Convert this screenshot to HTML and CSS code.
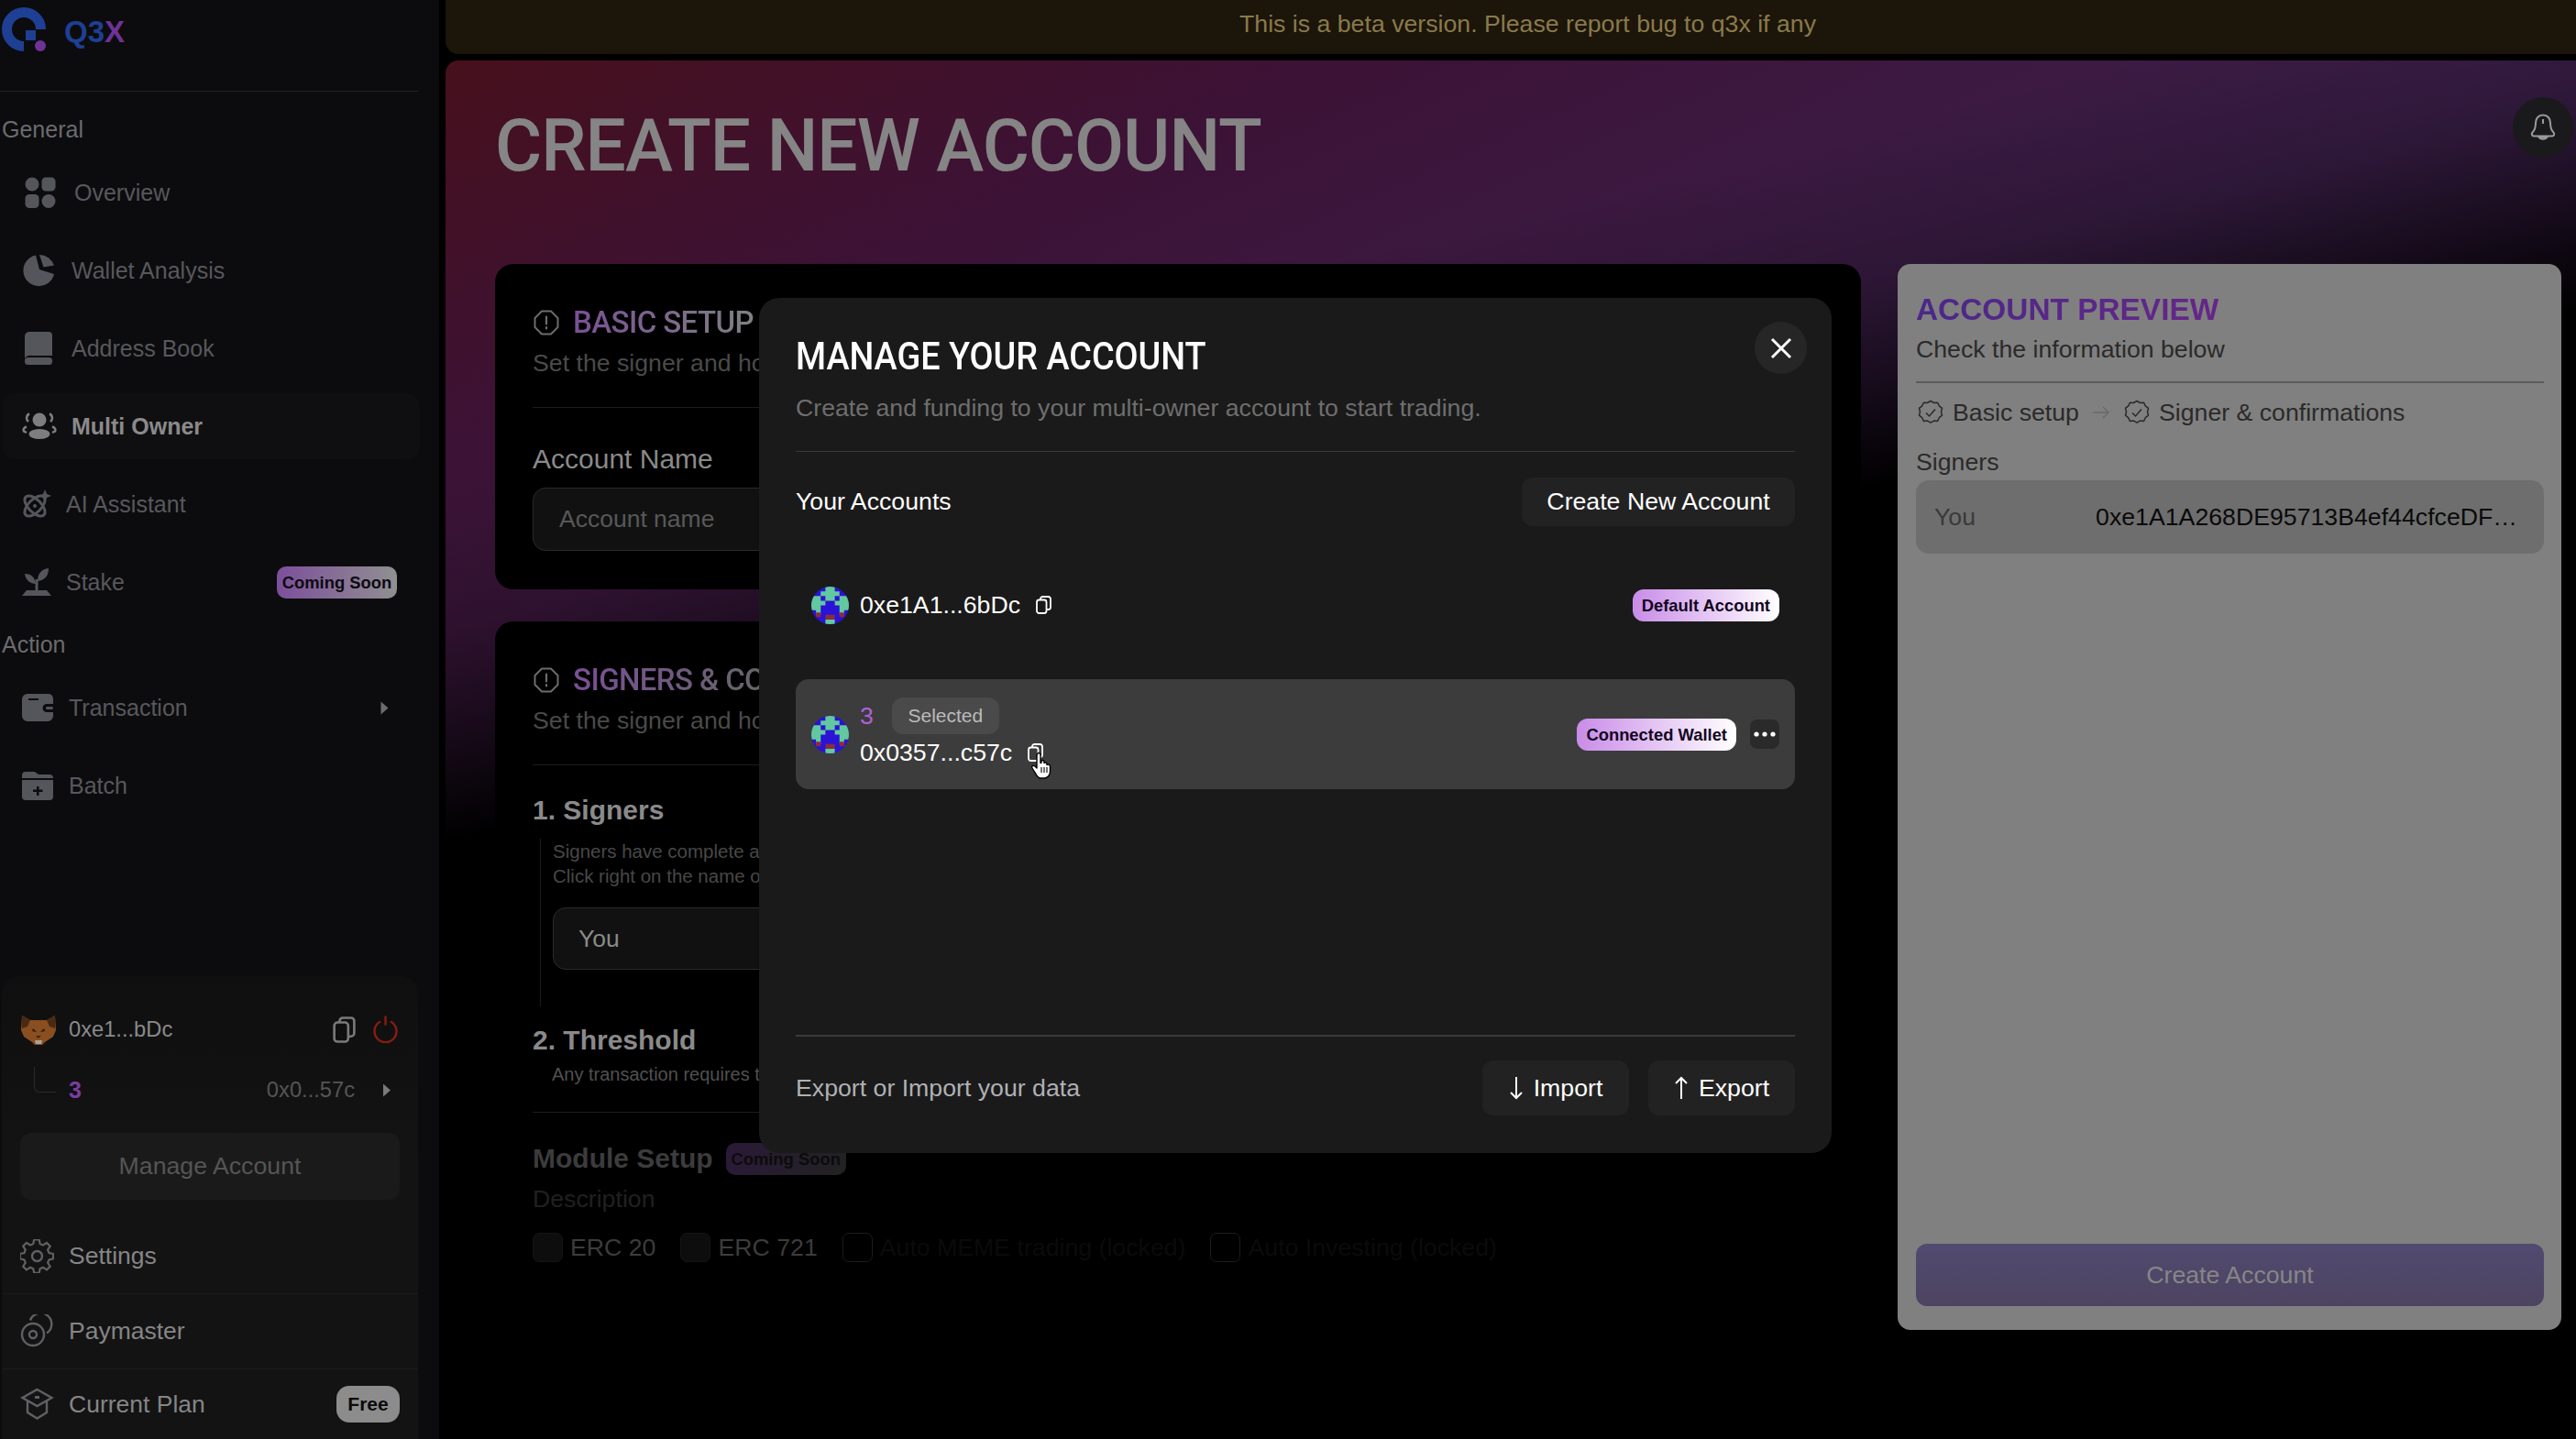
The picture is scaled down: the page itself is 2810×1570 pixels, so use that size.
FILE: index.html
```html
<!DOCTYPE html>
<html lang="en">

<head>
    <meta charset="UTF-8" />
    <meta name="viewport" content="width=device-width, initial-scale=1.0" />
    <title>Q3X - Create New Account</title>
    <link rel="stylesheet" href="styles.css">
</head>

<body>
    <!-- shared icons -->
    <svg class="defs" width="0" height="0">
        <defs>
            <symbol id="blockie" viewBox="0 0 8 8">
                <rect width="8" height="8" fill="#2a12d6" />
                <path fill="#62c8a0" d="M3 0h2v1h-2zM2 1h4v1h-4zM1 2h1v1h-1zM3 2h2v1h-2zM6 2h1v1h-1zM0 3h3v1h-3zM5 3h3v1h-3zM0 2h1v1h-1zM7 2h1v1h-1zM0 4h2v1h-2zM6 4h2v1h-2zM1 5h1v1h-1zM6 5h1v1h-1zM2 6h0v0zM3 7h2v1h-2z" />
                <path fill="#8a2c3c" d="M1 5.500h1v1h-1zM6 5.500h1v1h-1zM3 6h2v1h-2z" />
            </symbol>
            <symbol id="copy" viewBox="0 0 17 20">
                <rect x="1" y="4.500" width="10.500" height="14.500" rx="2.500" fill="none" stroke="currentColor" stroke-width="1.800" />
                <path d="M5 4.500v-1a2.500 2.500 0 0 1 2.500-2.500h6a2.500 2.500 0 0 1 2.500 2.500v9a2.500 2.500 0 0 1-2.500 2.500h-2" fill="none" stroke="currentColor" stroke-width="1.800" />
            </symbol>
            <symbol id="chevron" viewBox="0 0 9 15">
                <path d="M0.500 0.500l8 7-8 7z" fill="currentColor" />
            </symbol>
            <symbol id="alert" viewBox="0 0 28 28">
                <path d="M9 1.500h10l7.500 7.500v10l-7.500 7.500h-10l-7.500-7.500v-10z" fill="none" stroke="currentColor" stroke-width="2" stroke-linejoin="round" />
                <path d="M14 7.500v8M14 19v1.500" stroke="currentColor" stroke-width="2.200" stroke-linecap="round" />
            </symbol>
            <symbol id="verified" viewBox="0 0 28 28">
                <path d="M14 1.500l3.600 2 4-.300 1.700 3.700 3.200 2.500-1 3.900 1 3.900-3.200 2.500-1.700 3.700-4-.300-3.600 2-3.600-2-4 .300-1.700-3.700-3.200-2.500 1-3.900-1-3.900 3.200-2.500 1.700-3.700 4 .300z" fill="none" stroke="currentColor" stroke-width="1.500" stroke-linejoin="round" />
                <path d="M9 14.500l3.500 3.500 6.500-7.500" fill="none" stroke="currentColor" stroke-width="1.500" />
            </symbol>
        </defs>
    </svg>

    <aside class="sidebar">
        <div class="brand">
            <svg class="brand-logo" viewBox="0 0 50 52" width="50" height="52">
                <path d="M42.500 25A18.500 18.500 0 1 0 24 43.500" fill="none" stroke="#1e3f94" stroke-width="11" />
                <rect x="26" y="26" width="11" height="11" fill="#1e3f94" />
                <circle cx="42" cy="43" r="6" fill="#6e3396" />
            </svg>
            <span class="brand-name">Q3<span class="brand-x">X</span></span>
        </div>

        <div class="nav-label">General</div>
        <nav class="nav-group">
            <a class="nav-row nav-col-57">
                <svg class="nav-icon" width="40" height="36" viewBox="0 0 40 36">
                    <circle cx="11" cy="9" r="7.500" />
                    <rect x="21.500" y="1.500" width="15" height="15" rx="4.500" />
                    <rect x="3.500" y="20" width="15" height="15" rx="4.500" />
                    <circle cx="29" cy="27.500" r="7.500" />
                </svg>
                <span>Overview</span>
            </a>
            <a class="nav-row nav-col-54">
                <svg class="nav-icon" width="36" height="36" viewBox="0 0 36 36">
                    <path d="M15 1.500A17 17 0 1 0 35 22L19 17z" />
                    <path d="M19 1a17 17 0 0 1 16 11.500l-11.500 2z" />
                </svg>
                <span>Wallet Analysis</span>
            </a>
            <a class="nav-row nav-col-54">
                <svg class="nav-icon" width="36" height="36" viewBox="0 0 36 36">
                    <path d="M8 0h21a4 4 0 0 1 4 4v22h-22a8 8 0 0 0-8 3v-24a5 5 0 0 1 5-5z" />
                    <rect x="3" y="28" width="30" height="8" rx="3.500" />
                </svg>
                <span>Address Book</span>
            </a>
            <a class="nav-row nav-row-active nav-col-54">
                <svg class="nav-icon" width="38" height="30" viewBox="0 0 38 30">
                    <ellipse cx="19" cy="8" rx="7.500" ry="7.500" />
                    <ellipse cx="19" cy="23.500" rx="11.500" ry="5.500" />
                    <path d="M8 1.500a5 5 0 0 0-1 8.500M30 1.500a5 5 0 0 1 1 8.500M5 15.500a6 4 0 0 0-3 5l3 1.500M33 15.500a6 4 0 0 1 3 5l-3 1.500" fill="none" stroke="currentColor" stroke-width="2.500" />
                </svg>
                <span>Multi Owner</span>
            </a>
            <a class="nav-row nav-col-47">
                <svg class="nav-icon" width="32" height="32" viewBox="0 0 32 32">
                    <g fill="none" stroke="currentColor" stroke-width="3">
                        <ellipse cx="14" cy="18" rx="14" ry="7" transform="rotate(45 14 18)" />
                        <ellipse cx="14" cy="18" rx="14" ry="7" transform="rotate(-45 14 18)" />
                    </g>
                    <circle cx="14" cy="18" r="2" />
                    <path d="M25 0l2 5 5 2-5 2-2 5-2-5-5-2 5-2z" />
                </svg>
                <span>AI Assistant</span>
            </a>
            <a class="nav-row nav-col-47">
                <svg class="nav-icon" width="32" height="30" viewBox="0 0 32 30">
                    <path d="M0 30l5-6h22l5 6z" />
                    <rect x="14.500" y="12" width="3" height="13" />
                    <path d="M3 6c6 0 11 3 12 11-6 0-11-4-12-11z" />
                    <path d="M29 0c0 8-4 13-12 14 0-8 4-13 12-14z" />
                </svg>
                <span>Stake</span>
                <span class="badge-soon">Coming Soon</span>
            </a>
        </nav>

        <div class="nav-label">Action</div>
        <nav class="nav-group">
            <a class="nav-row nav-col-50">
                <svg class="nav-icon" width="34" height="30" viewBox="0 0 34 30">
                    <path d="M6 0h22a6 6 0 0 1 6 5v6h-7a4 4 0 0 0 0 9h7v4a6 6 0 0 1-6 6h-22a6 6 0 0 1-6-6v-18a6 6 0 0 1 6-6zM7 7h11v-2h-11z" fill-rule="evenodd" />
                    <rect x="26" y="14" width="8" height="3" rx="1.500" />
                </svg>
                <span>Transaction</span>
                <svg class="nav-chevron" width="9" height="15"><use href="#chevron" /></svg>
            </a>
            <a class="nav-row nav-col-50">
                <svg class="nav-icon" width="34" height="31" viewBox="0 0 34 31">
                    <path d="M5 0h8c3 0 3 3 6 3h11a4 4 0 0 1 4 4h-34v-3a4 4 0 0 1 4-4z" />
                    <path d="M0 9h34v18a4 4 0 0 1-4 4h-26a4 4 0 0 1-4-4zM16 16v3.500h-4v2.500h4v4h2.500v-4h4v-2.500h-4v-3.500z" fill-rule="evenodd" />
                </svg>
                <span>Batch</span>
            </a>
        </nav>

        <section class="wallet-panel">
            <div class="wallet-row">
                <svg class="fox" width="38" height="34" viewBox="0 0 38 34">
                    <path d="M1 2l9 5h18l9-5 1 16-3 7-9 6-3 3h-8l-3-3-9-6-3-7z" fill="#8a4f20" />
                    <path d="M1 2l9 5-3 7-6 2zM37 2l-9 5 3 7 6 2z" fill="#4a2b12" />
                    <path d="M13 16l4 4-5-1zM25 16l-4 4 5-1z" fill="#2a1a0c" />
                    <path d="M15 29h8l-1 4h-6z" fill="#a9a29a" />
                    <path d="M16 24h6l-3 3z" fill="#3a2410" />
                </svg>
                <span class="wallet-addr">0xe1...bDc</span>
                <svg class="wallet-copy" width="25" height="29"><use href="#copy" /></svg>
                <svg class="wallet-power" width="27" height="30" viewBox="0 0 27 30">
                    <path d="M8 6.500a12 12 0 1 0 11 0M13.500 0.500v10" fill="none" stroke="currentColor" stroke-width="2.400" />
                </svg>
            </div>
            <div class="sub-wallet">
                <span class="tree-line"></span>
                <span class="sub-name">3</span>
                <span class="sub-addr">0x0...57c</span>
                <svg class="sub-chevron" width="10" height="15"><use href="#chevron" /></svg>
            </div>
            <button class="manage-btn">Manage Account</button>
            <a class="foot-row">
                <svg width="37" height="37" viewBox="0 0 37 37" class="foot-icon">
                    <path d="M15.500 1.500h6l1 5 3.500 1.500 4.500-2.700 4 4-2.800 4.400 1.500 3.600 5 1v6l-5 1-1.500 3.500 2.800 4.500-4 4-4.500-2.800-3.500 1.500-1 5h-6l-1-5-3.500-1.500-4.500 2.800-4-4 2.800-4.500-1.500-3.500-5-1v-6l5-1 1.500-3.600-2.800-4.400 4-4 4.500 2.700 3.500-1.500z" transform="scale(.92) translate(1 -1)" />
                    <circle cx="18.500" cy="18.500" r="5.500" />
                </svg>
                <span>Settings</span>
            </a>
            <a class="foot-row">
                <svg width="37" height="37" viewBox="0 0 37 37" class="foot-icon">
                    <circle cx="14" cy="22" r="12" />
                    <circle cx="14" cy="22" r="4" />
                    <path d="M11 6.500a12 12 0 1 1 18 14" />
                </svg>
                <span>Paymaster</span>
            </a>
            <a class="foot-row foot-row-last">
                <svg width="37" height="37" viewBox="0 0 37 37" class="foot-icon">
                    <path d="M18.500 2l16 9-16 9-16-9z" />
                    <path d="M8 15v12l10.500 6.500 10.500-6.500v-12" />
                    <path d="M16 10.500h5" stroke-width="3" />
                </svg>
                <span>Current Plan</span>
                <span class="badge-free">Free</span>
            </a>
        </section>
    </aside>

    <main class="main">
        <div class="beta-bar">This is a beta version. Please report bug to q3x if any</div>

        <div class="panel">
            <header class="hero">
                <h1>CREATE NEW ACCOUNT</h1>
                <button class="bell">
                    <svg width="28" height="31" viewBox="0 0 28 31">
                        <path d="M14 1.500c-5 0-8 3.800-8 8.500 0 5-1 8-3.500 10.500-1.500 1.500-.5 4 1.500 4h20c2 0 3-2.500 1.500-4-2.500-2.500-3.500-5.500-3.500-10.500 0-4.700-3-8.500-8-8.500z" fill="none" stroke="currentColor" stroke-width="2" />
                        <path d="M14 6v5" stroke="currentColor" stroke-width="2" />
                        <path d="M9.500 25.500a5 4 0 0 0 9 0z" fill="none" stroke="currentColor" stroke-width="2" />
                    </svg>
                </button>
            </header>

            <div class="columns">
                <div class="form-col">
                    <section class="card card-basic">
                        <div class="card-head">
                            <svg class="head-icon" width="28" height="28"><use href="#alert" /></svg>
                            <h2 class="card-title title-basic">BASIC SETUP</h2>
                        </div>
                        <p class="card-sub">Set the signer and ho</p>
                        <hr class="card-line" />
                        <label class="field-label">Account Name</label>
                        <div class="input-box input-placeholder">Account name</div>
                    </section>

                    <section class="card card-signers">
                        <div class="card-head">
                            <svg class="head-icon" width="28" height="28"><use href="#alert" /></svg>
                            <h2 class="card-title title-signers">SIGNERS &amp; CO</h2>
                        </div>
                        <p class="card-sub">Set the signer and ho</p>
                        <hr class="card-line" />
                        <h3 class="step-title">1. Signers</h3>
                        <div class="step-body">
                            <p class="step-note">Signers have complete au<br/>Click right on the name o</p>
                            <div class="input-box input-you">You</div>
                        </div>
                        <h3 class="step-title step-threshold">2. Threshold</h3>
                        <p class="threshold-note">Any transaction requires t</p>
                        <hr class="card-line line-module" />
                        <div class="module-head">
                            <h3 class="step-title module-title">Module Setup</h3>
                            <span class="badge-module">Coming Soon</span>
                        </div>
                        <p class="module-desc">Description</p>
                        <div class="module-list">
                            <span class="check-item"><i class="check-box"></i>ERC 20</span>
                            <span class="check-item"><i class="check-box"></i>ERC 721</span>
                            <span class="check-item check-locked"><i class="check-box"></i>Auto MEME trading (locked)</span>
                            <span class="check-item check-locked"><i class="check-box"></i>Auto Investing (locked)</span>
                        </div>
                    </section>
                </div>

                <aside class="preview">
                    <h2 class="preview-title">ACCOUNT PREVIEW</h2>
                    <p class="preview-sub">Check the information below</p>
                    <hr class="preview-line" />
                    <div class="steps">
                        <svg width="28" height="28"><use href="#verified" /></svg>
                        <span>Basic setup</span>
                        <svg class="steps-arrow" width="18" height="14" viewBox="0 0 18 14">
                            <path d="M0 7h17M11 1l6 6-6 6" fill="none" stroke="currentColor" stroke-width="1.300" />
                        </svg>
                        <svg width="28" height="28"><use href="#verified" /></svg>
                        <span>Signer &amp; confirmations</span>
                    </div>
                    <div class="preview-label">Signers</div>
                    <div class="signer-box">
                        <span class="signer-name">You</span>
                        <span class="signer-addr">0xe1A1A268DE95713B4ef44cfceDF…</span>
                    </div>
                    <button class="create-btn">Create Account</button>
                </aside>
            </div>
        </div>
    </main>

    <!-- Manage account modal -->
    <div class="modal">
        <button class="modal-close">
            <svg width="24" height="24" viewBox="0 0 24 24">
                <path d="M2 2l20 20M22 2l-20 20" stroke="#fff" stroke-width="3" />
            </svg>
        </button>
        <h2 class="modal-title">MANAGE YOUR ACCOUNT</h2>
        <p class="modal-sub">Create and funding to your multi-owner account to start trading.</p>
        <hr class="modal-line" />

        <div class="accounts-head">
            <span>Your Accounts</span>
            <button class="btn-dark btn-create">Create New Account</button>
        </div>

        <div class="account-row">
            <svg class="avatar" width="41" height="41"><use href="#blockie" /></svg>
            <div class="account-info">
                <div class="account-addr">0xe1A1...6bDc <svg class="copy-small" width="17" height="20"><use href="#copy" /></svg></div>
            </div>
            <span class="badge-grad">Default Account</span>
        </div>

        <div class="account-row account-selected">
            <svg class="avatar" width="41" height="41"><use href="#blockie" /></svg>
            <div class="account-info">
                <div class="account-name"><span class="account-num">3</span><span class="chip-selected">Selected</span></div>
                <div class="account-addr">0x0357...c57c <svg class="copy-small" width="17" height="20"><use href="#copy" /></svg></div>
            </div>
            <span class="badge-grad">Connected Wallet</span>
            <button class="btn-more">
                <svg width="24" height="6" viewBox="0 0 24 6" fill="#fff">
                    <circle cx="3" cy="3" r="2.600" />
                    <circle cx="12" cy="3" r="2.600" />
                    <circle cx="21" cy="3" r="2.600" />
                </svg>
            </button>
            <!-- mouse pointer caught in the screenshot -->
            <svg class="pointer" width="26" height="30" viewBox="0 0 26 30">
                <path d="M7 2c1.500-1 3 0 3 1.500v9l1-.5v-2c1.500-1 3 0 3 1v1.500c1.500-1 3-.5 3 1v1c1.500-1 3.500 0 3.500 1.500v5c0 4-2 7-5.500 8h-5c-3 0-4-3-6-6l-3-5c-1-2 1-3.500 3-2l2 2v-14c0-1 .5-1.500 1-2z" fill="#fff" stroke="#000" stroke-width="1.400" stroke-linejoin="round" />
                <path d="M11 17v6M14 17v6M17 17v6" stroke="#000" stroke-width="1.100" />
            </svg>
        </div>

        <div class="modal-foot">
            <span class="foot-text">Export or Import your data</span>
            <button class="btn-dark btn-arrow">
                <svg width="16" height="26" viewBox="0 0 16 26"><path d="M8 1v23M2 18l6 6 6-6" fill="none" stroke="#fff" stroke-width="2" /></svg>
                Import
            </button>
            <button class="btn-dark btn-arrow">
                <svg width="16" height="26" viewBox="0 0 16 26"><path d="M8 25v-23M2 8l6-6 6 6" fill="none" stroke="#fff" stroke-width="2" /></svg>
                Export
            </button>
        </div>
    </div>
</body>

</html>
```

FILE: styles.css
```css
/* Page */

* {
    box-sizing: border-box;
}

html,
body {
    margin: 0;
    height: 1570px;
    overflow: hidden;
}

body {
    display: flex;
    position: relative;
    background: #000;
    color: #fff;
    font-family: "Liberation Sans", Arial, sans-serif;
    font-size: 26.700px;
}

p,
h1,
h2,
h3 {
    margin: 0;
    font-weight: normal;
}

hr {
    margin: 0;
    border: none;
    height: 1px;
}

button {
    font-family: inherit;
    border: none;
    padding: 0;
}

.defs {
    position: absolute;
}

/* Sidebar */

.sidebar {
    width: 479px;
    height: 1570px;
    flex: none;
    display: flex;
    flex-direction: column;
    background: #0c0c0e;
    overflow: hidden;
}

.brand {
    display: flex;
    align-items: flex-start;
    height: 100px;
    width: 456px;
    padding: 7px 0 0 2px;
    border-bottom: 1px solid #212123;
}

.brand-name {
    margin: 9px 0 0 18px;
    line-height: 38px;
    font-size: 33px;
    font-weight: bold;
    color: #1e3f94;
}

.brand-x {
    color: #6e3396;
}

.nav-label {
    padding-left: 2px;
    margin-bottom: 18px;
    line-height: 30px;
    font-size: 25px;
    color: #6b6b6d;
}

.brand + .nav-label {
    margin-top: 26px;
}

.nav-group + .nav-label {
    margin-top: 17px;
}

.nav-group {
    display: flex;
    flex-direction: column;
    gap: 13px;
    width: 456px;
    margin-left: 2px;
}

.nav-row {
    display: grid;
    grid-template-columns: 54px auto 1fr;
    align-items: center;
    height: 72px;
    padding: 0 24px 0 22px;
    border-radius: 14px;
    font-size: 25px;
    color: #58585c;
}

.nav-col-57 {
    grid-template-columns: 57px auto 1fr;
}

.nav-col-54 {
    grid-template-columns: 54px auto 1fr;
}

.nav-col-47 {
    grid-template-columns: 48px auto 1fr;
}

.nav-col-50 {
    grid-template-columns: 51px auto 1fr;
}

.nav-row-active {
    background: #0f0f11;
    font-weight: bold;
    color: #8a8a8a;
}

.nav-icon {
    fill: #55565b;
    color: #55565b;
}

.nav-row-active .nav-icon {
    fill: #7e7e80;
    color: #7e7e80;
}

.badge-soon {
    justify-self: end;
    width: 131px;
    height: 35px;
    line-height: 35px;
    margin-right: 1px;
    text-align: center;
    border-radius: 10px;
    background: linear-gradient(90deg, #7c4f9c, #909090);
    font-size: 18.400px;
    font-weight: bold;
    color: #0d0a12;
}

.nav-chevron {
    justify-self: end;
    margin-right: 10px;
    color: #6c6c6e;
}

/* Wallet block at the sidebar bottom */

.wallet-panel {
    width: 454px;
    height: 505px;
    margin: auto 0 0 2px;
    padding-top: 28px;
    border-radius: 20px 20px 0 0;
    background: linear-gradient(180deg, #0f0f10, #131314 40%);
    flex: none;
}

.wallet-row {
    display: flex;
    align-items: center;
    height: 60px;
    padding: 0 22px 0 21px;
}

.wallet-addr {
    margin-left: 14px;
    flex: 1;
    font-size: 23.700px;
    color: #8a8a8a;
}

.wallet-copy {
    color: #7a7a7a;
}

.wallet-power {
    margin-left: 19px;
    color: #8a1c12;
}

.sub-wallet {
    position: relative;
    display: flex;
    align-items: center;
    height: 40px;
    margin-top: 16px;
    padding: 0 29px 0 73px;
}

.tree-line {
    position: absolute;
    left: 35px;
    top: -5px;
    width: 24px;
    height: 28px;
    border-left: 1px solid #2a2a2c;
    border-bottom: 1px solid #2a2a2c;
    border-bottom-left-radius: 6px;
}

.sub-name {
    flex: 1;
    font-size: 25px;
    font-weight: bold;
    color: #7a3ea0;
}

.sub-addr {
    font-size: 23.700px;
    color: #555;
}

.sub-chevron {
    margin-left: 30px;
    color: #7a7a7c;
}

.manage-btn {
    display: block;
    width: 414px;
    height: 73px;
    margin: 27px 0 21px 20px;
    border-radius: 12px;
    background: #1a1a1b;
    font-size: 26.700px;
    color: #555;
}

.foot-row {
    display: flex;
    align-items: center;
    height: 82px;
    padding: 0 20px 0 20px;
    gap: 16px;
    border-bottom: 1px solid #1c1c1d;
    font-size: 26.500px;
    color: #858585;
}

.foot-row-last {
    height: 76px;
    border-bottom: none;
}

.foot-icon {
    fill: none;
    stroke: #606064;
    stroke-width: 2.400;
}

.badge-free {
    margin-left: auto;
    width: 69px;
    height: 40px;
    line-height: 40px;
    text-align: center;
    border-radius: 14px;
    background: #8c8c8c;
    font-size: 21px;
    font-weight: bold;
    color: #0a0a0a;
}

/* Main area */

.main {
    flex: 1;
    margin-left: 7px;
    display: flex;
    flex-direction: column;
    gap: 7px;
    min-width: 0;
}

.beta-bar {
    height: 59px;
    line-height: 53px;
    padding-left: 866px;
    border-radius: 0 0 0 14px;
    background: #1c150a;
    color: #8a7a4a;
}

.panel {
    flex: 1;
    padding: 0 16px 0 54px;
    border-radius: 14px 0 0 0;
    background:
        linear-gradient(166deg, rgba(0, 0, 0, 0) 22%, rgba(0, 0, 0, 0.25) 30%, rgba(0, 0, 0, 0.65) 36%, #000 41%),
        linear-gradient(156deg, #47101c 0%, #3c1236 17%, #3c1f4a 40%);
}

.hero {
    position: relative;
    height: 222px;
}

.hero h1 {
    padding-top: 48px;
    line-height: 90px;
    font-family: Roboto, sans-serif;
    font-size: 80px;
    font-weight: 500;
    letter-spacing: -1px;
    color: #858585;
    transform: scaleX(.98);
    transform-origin: left;
}

/* pokes out past the panel padding */
.bell {
    position: absolute;
    right: -13px;
    top: 40px;
    width: 66px;
    height: 66px;
    display: flex;
    align-items: center;
    justify-content: center;
    border-radius: 50%;
    background: #1a1a1c;
    color: #9a9a9a;
}

.columns {
    display: flex;
    align-items: flex-start;
    gap: 40px;
}

.form-col {
    width: 1490px;
    display: flex;
    flex-direction: column;
    gap: 35px;
}

/* Cards behind the modal */

.card {
    padding: 44px 41px 0;
    border-radius: 20px;
    background: #000;
}

.card-basic {
    height: 355px;
}

.card-head {
    display: flex;
    align-items: center;
    gap: 15px;
    height: 40px;
}

.head-icon {
    margin-left: 1px;
    color: #6c6c6c;
}

.card-title {
    font-family: Roboto, sans-serif;
    font-size: 33px;
    font-weight: 500;
    line-height: 40px;
    letter-spacing: -.6px;
    -webkit-background-clip: text;
    background-clip: text;
    color: transparent;
}

.title-basic {
    background-image: linear-gradient(90deg, #7a4f96, #808080);
}

.title-signers {
    background-image: linear-gradient(90deg, #7a4f96 0%, #6e5b7c 60%, #666 100%);
}

.card-sub {
    margin-top: 9px;
    line-height: 30px;
    color: #4a4a4a;
}

.card-line {
    margin-top: 33px;
    background: #1c1c1c;
}

.field-label {
    display: block;
    margin-top: 38px;
    line-height: 36px;
    font-size: 30px;
    color: #8a8a8a;
}

.input-box {
    display: flex;
    align-items: center;
    padding-left: 28px;
    border: 1px solid #2a2a2a;
    border-radius: 14px;
    background: #111;
    font-size: 26.500px;
}

.input-placeholder {
    height: 69px;
    margin-top: 13px;
    color: #585858;
}

.input-you {
    height: 68px;
    margin-top: 21px;
    padding-left: 27px;
    color: #8a8a8a;
}

.step-title {
    margin-top: 31px;
    line-height: 36px;
    font-size: 30px;
    font-weight: bold;
    color: #8a8a8a;
}

.step-body {
    height: 183px;
    margin: 13px 0 0 8px;
    padding-left: 13px;
    border-left: 1px solid #1c1c1c;
}

.step-note {
    line-height: 27px;
    font-size: 20.500px;
    color: #484848;
}

.step-threshold {
    margin-top: 19px;
}

.threshold-note {
    margin-top: 6px;
    padding-left: 21px;
    line-height: 26px;
    font-size: 20px;
    color: #505050;
}

.line-module {
    margin-top: 28px;
}

.module-head {
    display: flex;
    align-items: center;
    gap: 14px;
    margin-top: 32px;
}

.module-title {
    margin-top: 0;
    color: #3c3c3c;
}

.badge-module {
    width: 131px;
    height: 35px;
    line-height: 35px;
    text-align: center;
    border-radius: 10px;
    background: linear-gradient(90deg, #2a1a38, #222);
    font-size: 18.400px;
    font-weight: bold;
    color: #0c0c0c;
}

.module-desc {
    margin-top: 11px;
    line-height: 30px;
    color: #202020;
}

.module-list {
    display: flex;
    gap: 27px;
    margin-top: 22px;
    color: #3c3c3c;
}

.check-item {
    display: flex;
    align-items: center;
    gap: 8px;
    height: 32px;
}

.check-box {
    width: 33px;
    height: 32px;
    border-radius: 7px;
    background: #0d0d0d;
    border: 1px solid #141414;
}

.check-locked {
    color: #0b0b0b;
}

.check-locked .check-box {
    background: #000;
    border: 1.500px solid #1c1c1c;
}

/* Preview panel */

.preview {
    width: 724px;
    height: 1163px;
    display: flex;
    flex-direction: column;
    padding: 30px 19px 26px 20px;
    border-radius: 14px;
    background: #808080;
    color: #2a2a2a;
}

.preview-title {
    line-height: 40px;
    font-size: 33.400px;
    font-weight: bold;
    -webkit-background-clip: text;
    background-clip: text;
    background-image: linear-gradient(90deg, #4a2888, #662688);
    color: transparent;
    align-self: flex-start;
}

.preview-sub {
    margin-top: 8px;
    line-height: 30px;
}

.preview-line {
    margin-top: 20px;
    height: 2px;
    background: #5c5c5c;
}

.steps {
    display: flex;
    align-items: center;
    height: 30px;
    margin-top: 17px;
    padding-left: 2px;
    gap: 10px;
}

.steps-arrow {
    margin: 0 6px 0 5px;
    color: #686868;
}

.preview-label {
    margin-top: 24px;
    line-height: 30px;
}

.signer-box {
    display: flex;
    align-items: center;
    justify-content: space-between;
    height: 80px;
    margin-top: 5px;
    padding: 0 29px 0 20px;
    border-radius: 14px;
    background: #6e6e6e;
}

.signer-name {
    color: #3a3a3a;
}

.signer-addr {
    color: #0a0a0a;
}

.create-btn {
    height: 68px;
    margin-top: auto;
    border-radius: 12px;
    background: linear-gradient(180deg, #524a70, #4c4460);
    font-size: 26.700px;
    color: #868686;
}

/* Modal */

.modal {
    position: absolute;
    left: 828px;
    top: 325px;
    width: 1170px;
    height: 933px;
    display: flex;
    flex-direction: column;
    padding: 39px 40px 41px;
    border-radius: 22px;
    background: #1a1a1a;
}

.modal-close {
    position: absolute;
    top: 26px;
    right: 27px;
    width: 57px;
    height: 57px;
    display: flex;
    align-items: center;
    justify-content: center;
    border-radius: 50%;
    background: #262626;
}

.modal-title {
    line-height: 50px;
    font-family: Roboto, sans-serif;
    font-size: 42px;
    font-weight: 500;
    transform: scaleX(.9);
    transform-origin: left;
}

.modal-sub {
    margin-top: 16px;
    line-height: 30px;
    color: #6e6e6e;
}

.modal-line {
    margin-top: 32px;
    background: #3a3a3a;
}

.accounts-head {
    display: flex;
    align-items: center;
    justify-content: space-between;
    margin-top: 28px;
}

.btn-dark {
    border-radius: 12px;
    background: #222;
    font-size: 26.700px;
    color: #fff;
}

.btn-create {
    width: 298px;
    height: 53px;
}

.account-row {
    position: relative;
    display: flex;
    align-items: center;
    height: 120px;
    margin-top: 26px;
    padding: 0 17px;
    border-radius: 14px;
}

.account-selected {
    margin-top: 21px;
    background: #3c3c3c;
}

.avatar {
    border-radius: 50%;
    flex: none;
}

.account-info {
    flex: 1;
    margin-left: 12px;
}

.account-addr {
    display: flex;
    align-items: center;
    gap: 10px;
    height: 40px;
}

.copy-small {
    color: #fff;
    margin-left: 7px;
}

.account-name {
    display: flex;
    align-items: center;
    gap: 20px;
    height: 40px;
}

.account-num {
    color: #b060d8;
}

.chip-selected {
    width: 117px;
    height: 40px;
    line-height: 40px;
    text-align: center;
    border-radius: 12px;
    background: #4a4a4a;
    font-size: 21px;
    color: #bbb;
}

.badge-grad {
    height: 35px;
    line-height: 35px;
    padding: 0 10px;
    border-radius: 12px;
    background: linear-gradient(90deg, #c98ce8, #fff);
    font-size: 18.400px;
    font-weight: bold;
    color: #12061e;
}

.btn-more {
    width: 32px;
    height: 32px;
    margin-left: 15px;
    display: flex;
    align-items: center;
    justify-content: center;
    border-radius: 8px;
    background: #2a2a2a;
}

.pointer {
    position: absolute;
    left: 257px;
    top: 79px;
}

.modal-foot {
    display: flex;
    align-items: center;
    gap: 21px;
    margin-top: auto;
    padding-top: 26px;
    border-top: 2px solid #3a3a3a;
}

.foot-text {
    flex: 1;
    color: #b0b0b4;
}

.btn-arrow {
    width: 160px;
    height: 60px;
    display: flex;
    align-items: center;
    justify-content: center;
    gap: 11px;
}
```
